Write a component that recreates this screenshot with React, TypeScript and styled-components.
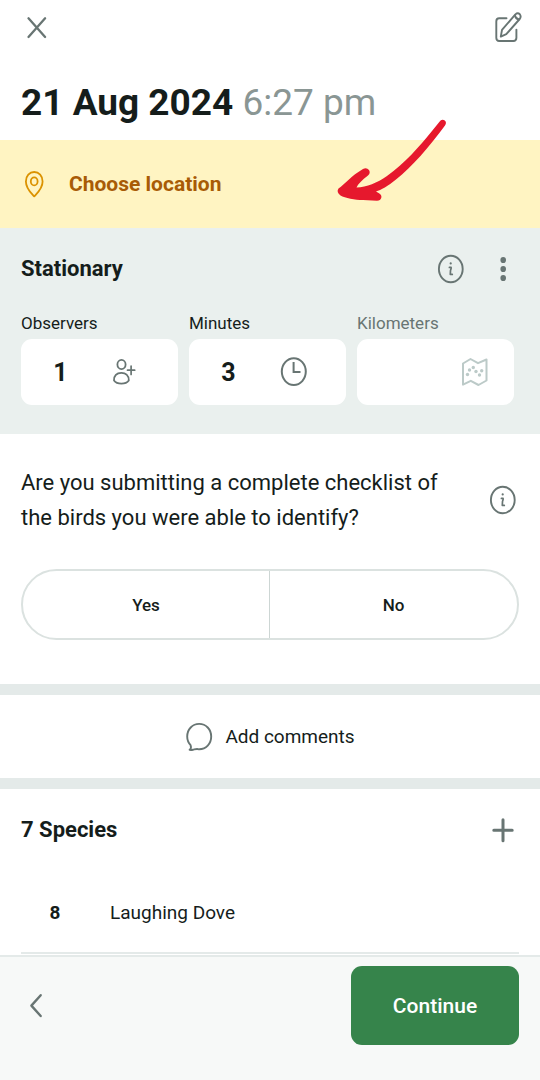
import React from "react";
import styled, { createGlobalStyle } from "styled-components";

const GlobalStyle = createGlobalStyle`
  *, *::before, *::after { box-sizing: border-box; }
  body {
    margin: 0;
    background: #fff;
    color: #151d1b;
    font-family: Roboto, "Liberation Sans", sans-serif;
  }
  button, input { font: inherit; color: inherit; }
`;

const ink = "#151d1b";
const slate = "#687573";
const mist = "#e4eae9";

const Page = styled.div`
  display: flex;
  flex-direction: column;
  min-height: 100vh;
`;

const Header = styled.header`
  padding: 8px 16px 13px 21px;
`;

const Bar = styled.div`
  display: flex;
  align-items: center;
  justify-content: space-between;
  height: 40px;
`;

const IconButton = styled.button`
  display: flex;
  align-items: center;
  justify-content: center;
  width: 32px;
  height: 40px;
  padding: 0;
  border: 0;
  background: none;
  color: ${slate};
  cursor: pointer;
`;

const Title = styled.h1`
  margin: 31px 0 0;
  font-size: 37px;
  line-height: 48px;
  font-weight: 700;
`;

const Time = styled.time`
  color: #8a9694;
  font-weight: 400;
`;

const Location = styled.section`
  position: relative;
  background: #fff4c2;
`;

const LocationButton = styled.button`
  display: flex;
  align-items: center;
  gap: 23px;
  width: 100%;
  height: 88px;
  padding: 0 21px;
  border: 0;
  background: none;
  color: #a85b06;
  font-size: 21px;
  font-weight: 700;
  cursor: pointer;
`;

const Arrow = styled.svg`
  position: absolute;
  top: -24px;
  left: 334px;
  pointer-events: none;
`;

const Effort = styled.section`
  padding: 21px 21px 29px;
  background: #eaf0ee;
`;

const SectionTitle = styled.h2`
  flex: 1;
  margin: 0;
  font-size: 22px;
  line-height: 32px;
  font-weight: 700;
`;

const Row = styled.div`
  display: flex;
  align-items: center;
  gap: 20px;
`;

const Fields = styled.div`
  display: grid;
  grid-template-columns: repeat(3, 1fr);
  gap: 11px;
  margin-top: 22px;
  padding-right: 5px;
`;

const Field = styled.label<{ $muted?: boolean }>`
  display: flex;
  flex-direction: column;
  gap: 4px;
  color: ${(p) => (p.$muted ? slate : ink)};
  font-size: 17px;
  line-height: 24px;
`;

const FieldBox = styled.span<{ $end?: boolean }>`
  display: flex;
  align-items: center;
  justify-content: ${(p) => (p.$end ? "space-between" : "flex-start")};
  gap: 12px;
  height: 66px;
  padding-right: ${(p) => (p.$end ? 25 : 0)}px;
  border-radius: 11px;
  background: #fff;
  color: ${(p) => (p.$end ? "#bccac8" : slate)};
`;

const FieldInput = styled.input`
  width: 79px;
  height: 66px;
  padding: 0;
  border: 0;
  background: none;
  color: ${ink};
  font-size: 25px;
  font-weight: 700;
  text-align: center;
`;

const Complete = styled.section`
  padding: 31px 21px 44px;
`;

const Question = styled.p`
  flex: 1;
  margin: 0;
  font-size: 22px;
  line-height: 35px;
`;

const Choices = styled.fieldset`
  display: grid;
  grid-template-columns: 1fr 1fr;
  height: 71px;
  margin: 34px 0 0;
  padding: 0;
  border: 2px solid #dbe2e0;
  border-radius: 36px;
`;

const Choice = styled.label`
  display: flex;
  align-items: center;
  justify-content: center;
  font-size: 17px;
  font-weight: 500;
  cursor: pointer;

  &:first-of-type { border-right: 1px solid #cdd6d4; }
`;

const HiddenRadio = styled.input`
  appearance: none;
  width: 0;
  height: 0;
  margin: 0;
`;

const Comments = styled.section`
  border: solid ${mist};
  border-width: 11px 0;
`;

const CommentsButton = styled.button`
  display: flex;
  align-items: center;
  justify-content: center;
  gap: 12px;
  width: 100%;
  height: 83px;
  border: 0;
  background: none;
  font-size: 19px;
  cursor: pointer;
`;

const Species = styled.section`
  flex: 1;
  padding: 21px 21px 0;
`;

const SpeciesList = styled.ul`
  margin: 22px 0 0;
  padding: 0;
  list-style: none;
`;

const SpeciesItem = styled.li`
  display: flex;
  align-items: center;
  height: 82px;
  border-bottom: 2px solid ${mist};
  font-size: 19px;
`;

const Count = styled.strong`
  width: 68px;
  margin-right: 21px;
  text-align: center;
`;

const Footer = styled.footer`
  display: flex;
  justify-content: space-between;
  padding: 9px 21px 35px;
  border-top: 2px solid ${mist};
  background: #f7f9f8;
`;

const BackButton = styled(IconButton)`
  height: 79px;
`;

const Continue = styled.button`
  width: 168px;
  height: 79px;
  border: 0;
  border-radius: 11px;
  background: #36844b;
  color: #fff;
  font-size: 21px;
  font-weight: 500;
  cursor: pointer;
`;

type GlyphProps = { w?: number; h?: number; sw?: number; children: React.ReactNode };

const Glyph = ({ w = 28, h = 32, sw = 2, children }: GlyphProps) => (
  <svg
    width={w}
    height={h}
    viewBox={`0 0 ${w} ${h}`}
    fill="none"
    stroke="currentColor"
    strokeWidth={sw}
    strokeLinecap="round"
    strokeLinejoin="round"
    aria-hidden="true"
  >
    {children}
  </svg>
);

const InfoIcon = () => (
  <Glyph w={28} h={30} sw={1.9}>
    <ellipse cx="13.8" cy="15" rx="11.900" ry="13.2" />
    <circle cx="13.700" cy="9.4" r="1.1" fill="currentColor" stroke="none" />
    <path d="M12.4 13.4H14.1V14.600L13.500 16.500L13.300 20.400H15.300" strokeWidth="1.7" />
  </Glyph>
);

export default function App() {
  return (
    <Page>
      <GlobalStyle />
      <Header>
        <Bar>
          <IconButton aria-label="Close">
            <Glyph sw={2.3}>
              <path d="M5.5 6.3L22.1 25M22.1 6.3L5.5 25" />
            </Glyph>
          </IconButton>
          <IconButton aria-label="Edit">
            <Glyph w={30} h={34} sw={1.9}>
              <path d="M13.500 7.2H6.2Q3.3 7.2 3.3 10.4V26.8Q3.3 30 6.2 30H20.4Q23.4 30 23.4 26.8V18.6" />
              <path d="M7.800 25.6L9 18.9L22.4 3.4Q24.7 1.4 26.8 3.2Q28.5 5.5 26.7 8L13.3 23.200Z" />
              <path d="M22 4.5Q22.6 7.9 26 8.4" />
            </Glyph>
          </IconButton>
        </Bar>
        <Title>
          21 Aug 2024 <Time>6:27 pm</Time>
        </Title>
      </Header>

      <Location>
        <LocationButton>
          <svg width="25" height="30" viewBox="0 0 25 30" fill="none" stroke="#db9200" strokeWidth="1.8" strokeLinejoin="round" aria-hidden="true">
            <path d="M13.2 27.4C10 23.8 4.9 19.5 4.9 12.4C4.9 6.9 8.5 3 13.2 3S21.6 6.9 21.6 12.4C21.6 19.5 16.4 23.8 13.2 27.4Z" />
            <ellipse cx="13.2" cy="12.4" rx="3.4" ry="4" />
          </svg>
          Choose location
        </LocationButton>
        <Arrow width="116" height="92" viewBox="0 0 116 92" aria-hidden="true">
          <path
            fill="#e6182d"
            d="M106.300 4.800Q108.500 2.800 110.800 4.600Q113 6.500 111 9.500C95 31 78 51 62 63.500C54 70 47 74 42 75.500L45 77.300Q48 79 47.300 81.800Q46.500 84.800 43 84.800L29 84C21 84 11 82 6.500 79.500Q2 76 4.500 72.500C11 68 17 60 29 53Q32.500 51 35 54Q36.800 57 34 59.500C28 64 24 68 22.500 71.500C33 71 43 67 53 60C71 47 85 31 98 15Z"
          />
        </Arrow>
      </Location>

      <Effort>
        <Row>
          <SectionTitle>Stationary</SectionTitle>
          <IconButton aria-label="About protocols">
            <InfoIcon />
          </IconButton>
          <IconButton aria-label="More options">
            <svg width="8" height="26" viewBox="0 0 8 26" fill="currentColor" aria-hidden="true">
              <ellipse cx="4.200" cy="4" rx="2.800" ry="3.100" />
              <ellipse cx="4.200" cy="13" rx="2.800" ry="3.100" />
              <ellipse cx="4.200" cy="22" rx="2.800" ry="3.100" />
            </svg>
          </IconButton>
        </Row>
        <Fields>
          <Field>
            Observers
            <FieldBox>
              <FieldInput defaultValue="1" inputMode="numeric" />
              <Glyph sw={1.8}>
                <ellipse cx="9.500" cy="8.500" rx="4.100" ry="4.600" />
                <path d="M2 24.400C2 19 5.300 16.800 9.400 16.800S16.800 19 16.800 24.400C13.800 28.600 5 28.600 2 24.400Z" />
                <path d="M15.500 14.200H22.700M19.100 10V18.400" strokeWidth="1.700" />
              </Glyph>
            </FieldBox>
          </Field>
          <Field>
            Minutes
            <FieldBox>
              <FieldInput defaultValue="3" inputMode="numeric" />
              <Glyph>
                <ellipse cx="13.800" cy="15.600" rx="12" ry="13.400" />
                <path d="M13.600 7V15.900H19.500" strokeLinecap="square" strokeLinejoin="miter" />
              </Glyph>
            </FieldBox>
          </Field>
          <Field $muted>
            Kilometers
            <FieldBox $end>
              <FieldInput disabled />
              <Glyph>
                <path d="M2 7.500L9.500 3L17 7.200L25.500 3.500V24.500L17.500 29L9.800 24.800L2 28.600Z" />
                <g fill="currentColor" stroke="none">
                  <circle cx="6.500" cy="18.500" r="1.700" />
                  <circle cx="8.500" cy="14" r="1.700" />
                  <circle cx="12.300" cy="11.500" r="1.700" />
                  <circle cx="15" cy="15.500" r="1.700" />
                  <circle cx="18.500" cy="19" r="1.700" />
                  <circle cx="20.700" cy="14.800" r="1.700" />
                </g>
              </Glyph>
            </FieldBox>
          </Field>
        </Fields>
      </Effort>

      <Complete>
        <Row>
          <Question id="complete-question">
            Are you submitting a complete checklist of the birds you were able to identify?
          </Question>
          <IconButton aria-label="About complete checklists">
            <InfoIcon />
          </IconButton>
        </Row>
        <Choices aria-labelledby="complete-question">
          <Choice>
            <HiddenRadio type="radio" name="complete" value="yes" />
            Yes
          </Choice>
          <Choice>
            <HiddenRadio type="radio" name="complete" value="no" />
            No
          </Choice>
        </Choices>
      </Complete>

      <Comments>
        <CommentsButton>
          <svg width="28" height="32" viewBox="0 0 28 32" fill="none" stroke={slate} strokeWidth="1.900" strokeLinejoin="round" aria-hidden="true">
            <path d="M4.600 28.800C6.500 27.500 6.300 26.200 5.600 24.200C3.300 21.800 2.200 18.900 2.200 15.600C2.200 8.300 7.500 2.900 14.200 2.900S26.200 8.300 26.200 15.600S21 28.300 14.200 28.300C11.500 27.500 10 28.300 8 28.700C6.500 29 5.500 29 4.600 28.800Z" />
          </svg>
          Add comments
        </CommentsButton>
      </Comments>

      <Species>
        <Row>
          <SectionTitle>7 Species</SectionTitle>
          <IconButton aria-label="Add species">
            <Glyph sw={3}>
              <path d="M4.800 16.300H23.200M14 5.700V26.700" />
            </Glyph>
          </IconButton>
        </Row>
        <SpeciesList>
          <SpeciesItem>
            <Count>8</Count>
            Laughing Dove
          </SpeciesItem>
        </SpeciesList>
      </Species>

      <Footer>
        <BackButton aria-label="Back">
          <Glyph sw={2.4}>
            <path d="M17.700 5.200L8.400 15.600L17.700 26" />
          </Glyph>
        </BackButton>
        <Continue>Continue</Continue>
      </Footer>
    </Page>
  );
}
